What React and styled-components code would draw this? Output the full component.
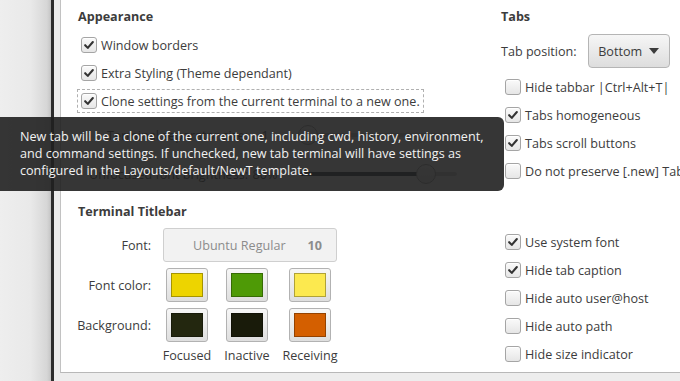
import React from 'react'
import styled, { createGlobalStyle } from 'styled-components'

const GlobalStyle = createGlobalStyle`
	html, body {
		margin: 0;
		padding: 0;
		width: 680px;
		height: 381px;
		overflow: hidden;
		font-family: "Open Sans", "Noto Sans", sans-serif;
		font-size: 12.6px;
		color: #3c3c3c;
	}
`

const appearance = [
	{ label: 'Window borders', checked: true },
	{ label: 'Extra Styling (Theme dependant)', checked: true },
	{ label: 'Clone settings from the current terminal to a new one.', checked: true, focused: true }
]

const tabOptions = [
	{ label: 'Hide tabbar |Ctrl+Alt+T|', checked: false },
	{ label: 'Tabs homogeneous', checked: true },
	{ label: 'Tabs scroll buttons', checked: true },
	{ label: 'Do not preserve [.new] Tab', checked: false }
]

const titlebarOptions = [
	{ label: 'Use system font', checked: true },
	{ label: 'Hide tab caption', checked: true },
	{ label: 'Hide auto user@host', checked: false },
	{ label: 'Hide auto path', checked: false },
	{ label: 'Hide size indicator', checked: false }
]

const swatches = [
	{ label: 'Font color:', colors: ['#edd400', '#4e9a06', '#fce94f'] },
	{ label: 'Background:', colors: ['#23270f', '#191b0a', '#d45f00'] }
]

const captions = ['Focused', 'Inactive', 'Receiving']

const CheckBox = ({ label, checked, focused }) => (
	<CheckRow focused={focused}>
		<Box>
			{checked && (
				<svg width='16' height='16' viewBox='0 0 16 16'>
					<path d='M3.6 8.2 L6.6 11.3 L12.4 4.6' fill='none' stroke='#333' strokeWidth='2.4' strokeLinecap='round' strokeLinejoin='round'/>
				</svg>
			)}
		</Box>
		<span>{label}</span>
	</CheckRow>
)

const Slider = ({ value }) => (
	<Track>
		<Fill style={{ width: `${value}%` }}/>
		<Knob style={{ left: `${value}%` }}/>
	</Track>
)

const App = () => (
	<Screen>
		<GlobalStyle/>
		<Desk/>
		<Edge/>
		<Window>
			<Panel>
				<LeftColumn>
					<Heading>Appearance</Heading>
					<Rows top={6}>
						{appearance.map(o => <CheckBox key={o.label} {...o}/>)}
					</Rows>
					<SliderRow top={9}>
						<SliderLabel>Terminal separator size:</SliderLabel>
						<SliderValue>1</SliderValue>
						<Slider value={5}/>
					</SliderRow>
					<SliderRow top={17}>
						<SliderLabel>Unfocused font brightness:</SliderLabel>
						<SliderValue>80%</SliderValue>
						<Slider value={80}/>
					</SliderRow>
					<Heading top={19}>Terminal Titlebar</Heading>
					<TitlebarGrid>
						<FieldLabel>Font:</FieldLabel>
						<FontButton>
							<span>Ubuntu Regular</span>
							<FontSize>10</FontSize>
						</FontButton>
						{swatches.map(row => (
							<React.Fragment key={row.label}>
								<FieldLabel>{row.label}</FieldLabel>
								{row.colors.map(c => (
									<Cell key={c}>
										<SwatchButton>
											<Swatch color={c}/>
										</SwatchButton>
									</Cell>
								))}
							</React.Fragment>
						))}
						<span/>
						{captions.map(c => <Caption key={c}>{c}</Caption>)}
					</TitlebarGrid>
				</LeftColumn>
				<RightColumn>
					<Heading>Tabs</Heading>
					<TabPosition>
						<span>Tab position:</span>
						<DropButton>
							Bottom
							<svg width='10' height='6' viewBox='0 0 10 6'>
								<path d='M0 0 L10 0 L5 6 Z' fill='#3c3c3c'/>
							</svg>
						</DropButton>
					</TabPosition>
					<Rows indent top={5}>
						{tabOptions.map(o => <CheckBox key={o.label} {...o}/>)}
					</Rows>
					<Rows indent top={43}>
						{titlebarOptions.map(o => <CheckBox key={o.label} {...o}/>)}
					</Rows>
				</RightColumn>
			</Panel>
		</Window>
		<Tooltip>
			New tab will be a clone of the current one, including cwd, history, environment,<br/>
			and command settings. If unchecked, new tab terminal will have settings as<br/>
			configured in the Layouts/default/NewT template.
		</Tooltip>
	</Screen>
)

export default App

const Screen = styled.div`
	position: relative;
	display: flex;
	width: 680px;
	height: 381px;
	overflow: hidden;
	background: #ececec;
`

const Desk = styled.div`
	width: 51px;
	flex: none;
	background: linear-gradient(to right, #eeeeee 0%, #e9e9e9 60%, #d6d6d6 92%, #c4c4c4 100%);
`

const Edge = styled.div`
	width: 3px;
	flex: none;
	background: #2d2d2d;
`

const Window = styled.div`
	flex: 1;
	display: flex;
	padding: 0 0 8px 6px;
	background: #ededed;
`

const Panel = styled.div`
	flex: 1;
	display: grid;
	grid-template-columns: 423px 1fr;
	align-items: start;
	padding: 9px 0 0 17px;
	background: #ffffff;
	border-left: 1px solid #c2c2c2;
	border-bottom: 1px solid #b8b8b8;
`

const LeftColumn = styled.div`
	display: flex;
	flex-direction: column;
`

const RightColumn = styled.div`
	display: flex;
	flex-direction: column;
`

const Heading = styled.div`
	font-weight: 700;
	line-height: 16px;
	height: 16px;
	margin-top: ${p => p.top || 0}px;
`

const Rows = styled.div`
	display: flex;
	flex-direction: column;
	margin-top: ${p => p.top}px;
	padding-left: ${p => p.indent ? 1 : 0}px;
	align-items: flex-start;
`

const CheckRow = styled.div`
	display: flex;
	align-items: center;
	gap: 4px;
	height: 22px;
	margin: 2px 0 2px -1px;
	padding: 0 3px;
	border: 1px dashed ${p => p.focused ? '#b0b0b0' : 'transparent'};
	white-space: nowrap;
`

const Box = styled.div`
	width: 14px;
	height: 14px;
	flex: none;
	display: flex;
	align-items: center;
	justify-content: center;
	border: 1px solid #a5a5a5;
	border-radius: 3px;
	background: linear-gradient(#fafafa, #e6e6e6);
	box-shadow: inset 0 1px 0 #fff;
`

const SliderRow = styled.div`
	display: grid;
	grid-template-columns: 170px 34px 175px;
	column-gap: 0;
	align-items: center;
	height: 22px;
	margin-top: ${p => p.top}px;
	& > :last-child {
		margin-left: 18px;
	}
`

const SliderLabel = styled.span`
	text-align: right;
	white-space: nowrap;
`

const SliderValue = styled.span`
	text-align: center;
`

const Track = styled.div`
	position: relative;
	height: 4px;
	border-radius: 2px;
	background: #c9c9c9;
`

const Fill = styled.div`
	height: 100%;
	border-radius: 2px;
	background: #1f2d3a;
`

const Knob = styled.div`
	position: absolute;
	top: 50%;
	width: 18px;
	height: 18px;
	border-radius: 50%;
	transform: translate(-50%, -50%);
	border: 1px solid #9a9a9a;
	background: linear-gradient(#fbfbfb, #e2e2e2);
`

const TitlebarGrid = styled.div`
	display: grid;
	grid-template-columns: 79px 60px 60px 66px;
	grid-template-rows: 34px 34px 34px 16px;
	row-gap: 6px;
	margin-top: 8px;
`

const FieldLabel = styled.span`
	display: flex;
	align-items: center;
	justify-content: flex-end;
	padding-right: 6px;
	white-space: nowrap;
`

const FontButton = styled.div`
	grid-column: 2 / span 3;
	display: flex;
	align-items: center;
	justify-content: space-between;
	margin: 0 6px;
	padding: 0 14px 0 29px;
	border: 1px solid #cfcfcf;
	border-radius: 3px;
	background: #f2f2f2;
	color: #8c8c8c;
	white-space: nowrap;
`

const FontSize = styled.span`
	font-weight: 700;
`

const Cell = styled.div`
	display: flex;
	justify-content: center;
`

const SwatchButton = styled.div`
	display: flex;
	align-items: center;
	justify-content: center;
	width: 42px;
	box-sizing: border-box;
	border: 1px solid #b2b2b2;
	border-radius: 3px;
	background: linear-gradient(#f7f7f7, #dedede);
`

const Swatch = styled.div`
	width: 30px;
	height: 22px;
	background: ${p => p.color};
	border: 1px solid rgba(0, 0, 0, 0.3);
`

const Caption = styled.span`
	text-align: center;
	line-height: 16px;
	white-space: nowrap;
`

const TabPosition = styled.div`
	display: flex;
	align-items: center;
	gap: 11px;
	margin-top: 9px;
`

const DropButton = styled.div`
	display: flex;
	align-items: center;
	justify-content: center;
	gap: 7px;
	width: 80px;
	height: 32px;
	border: 1px solid #b5b5b5;
	border-radius: 4px;
	background: linear-gradient(#f6f6f6, #dddddd);
`

const Tooltip = styled.div`
	position: absolute;
	left: -6px;
	top: 117px;
	width: 510px;
	height: 74px;
	box-sizing: border-box;
	padding: 11px 0 0 26px;
	border-radius: 6px;
	background: rgba(32, 32, 32, 0.9);
	color: #f2f2f2;
	line-height: 17px;
	white-space: nowrap;
`
